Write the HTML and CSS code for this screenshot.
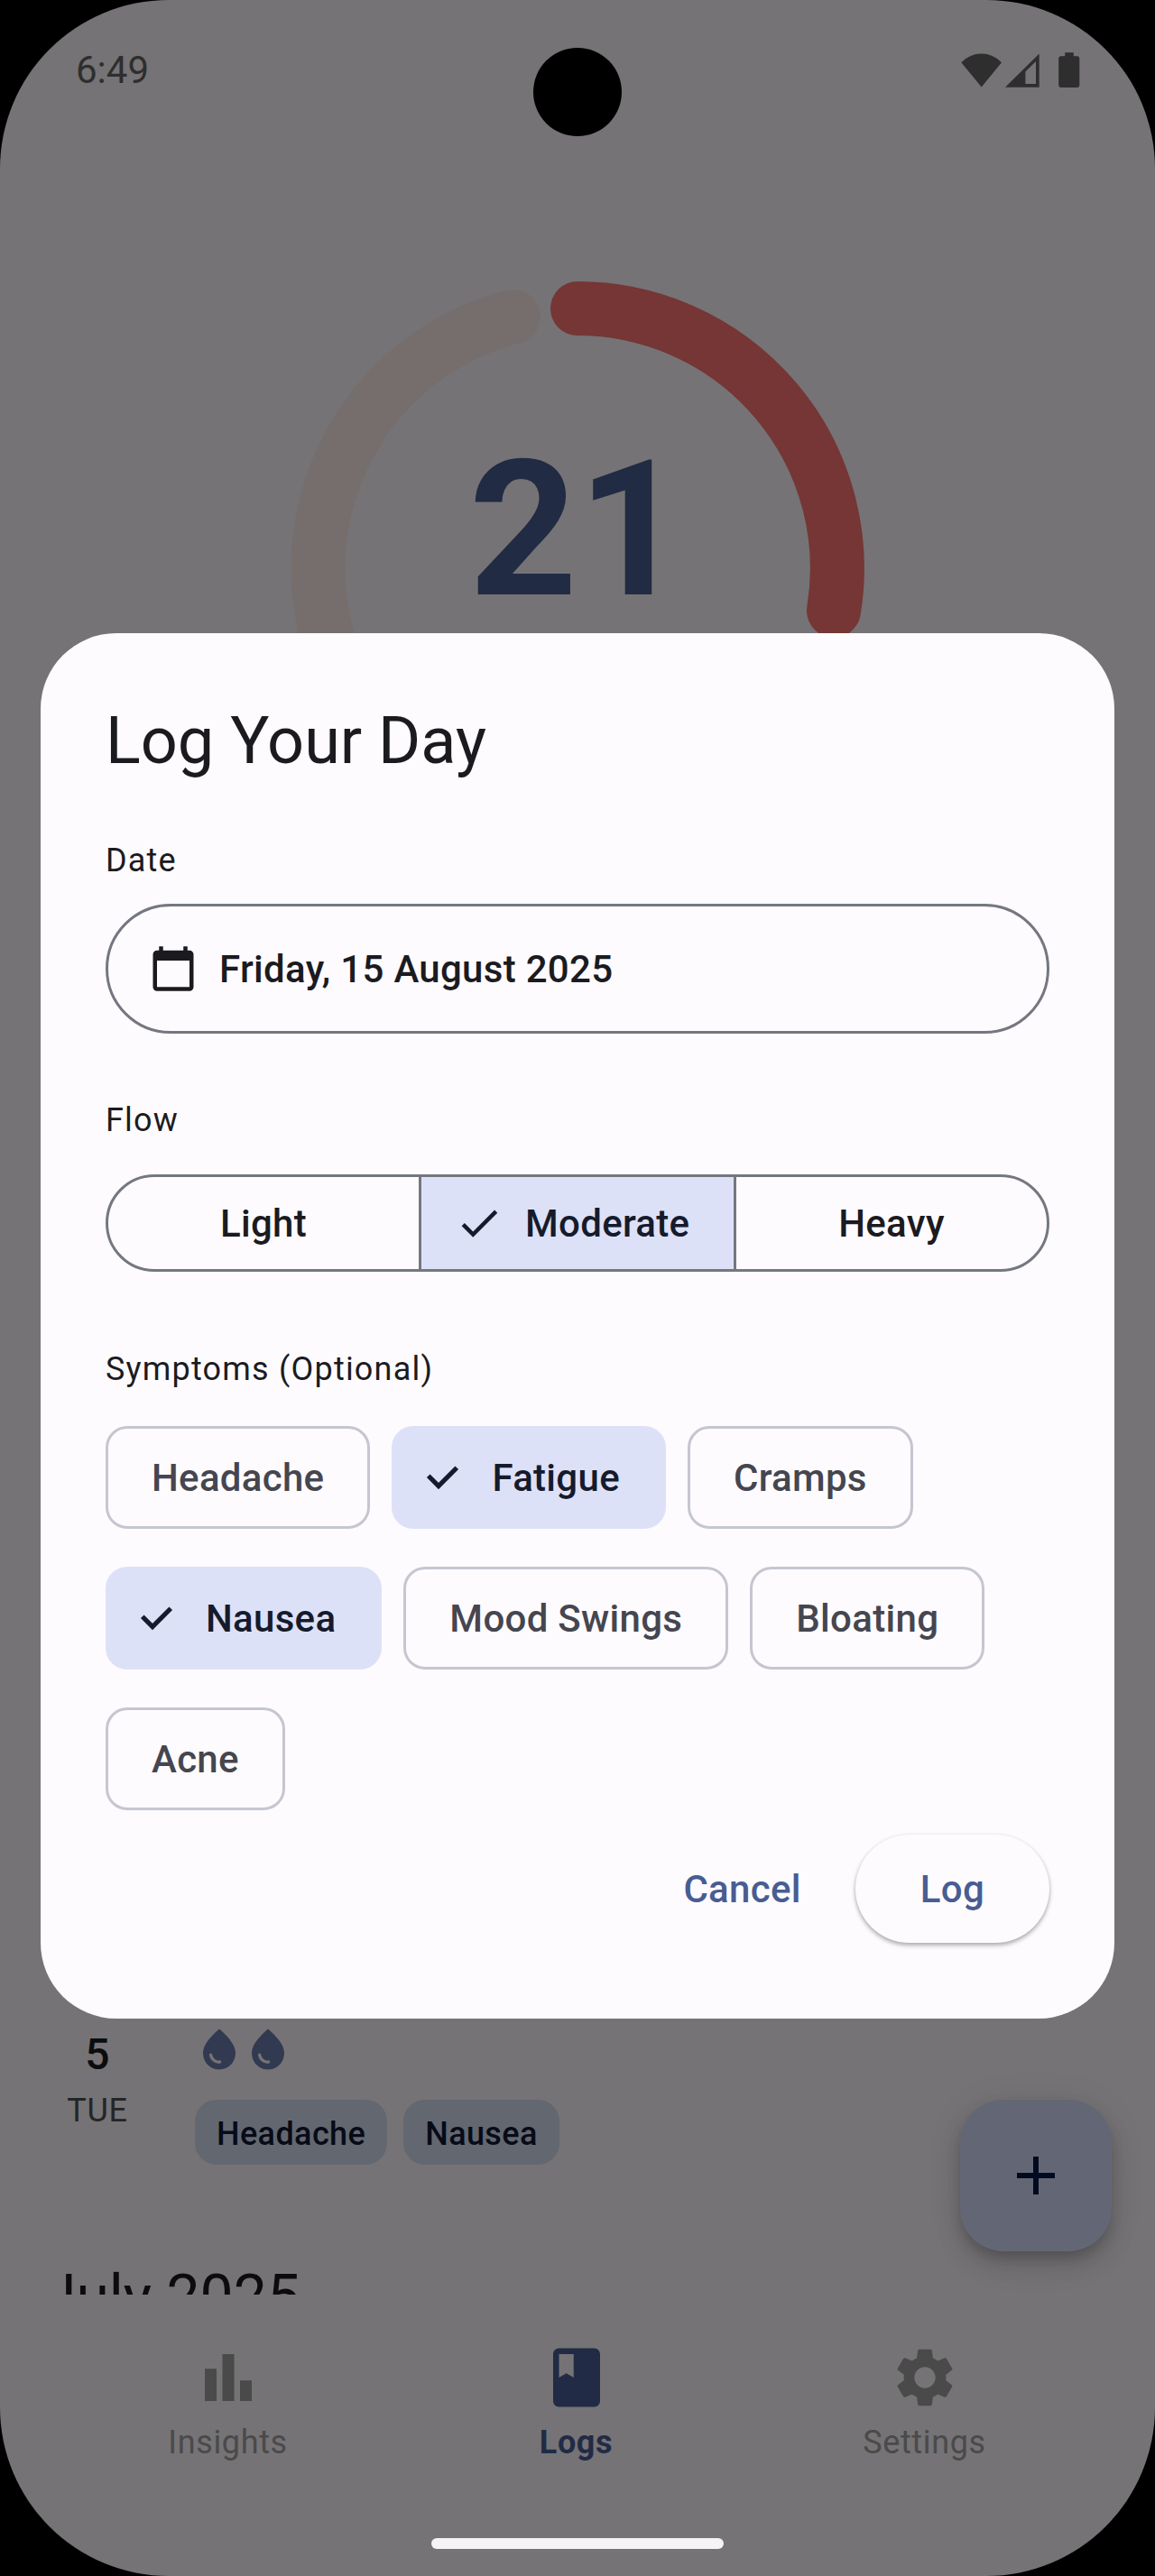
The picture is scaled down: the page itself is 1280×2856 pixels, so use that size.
FILE: index.html
```html
<!DOCTYPE html>
<html lang="en">
<head>
<meta charset="utf-8">
<title>Log Your Day</title>
<link rel="stylesheet" href="styles.css">
</head>
<body>
<div class="screen">
  <header class="status">
    <span class="status-time">6:49</span>
    <span class="status-icons">
      <svg width="46" height="38" viewBox="0 0 46 38"><path d="M0.3 10.2Q10 .5 22.7 .5T45 10.2L22.7 37.5z"/></svg>
      <svg class="signal" width="38" height="38" viewBox="0 0 38 38"><path fill-rule="evenodd" d="M37.7 .5V37.8H0zM34 9L22.4 20.6V34H34z"/></svg>
      <svg class="battery" width="24" height="40" viewBox="0 0 24 40"><path d="M7.2 .3H16.8V4.3H21Q23.3 4.3 23.3 6.8V36.6Q23.3 39 21 39H2.6Q.2 39 .2 36.6V6.8Q.2 4.3 2.6 4.3H7.2z"/></svg>
    </span>
  </header>

  <main class="content">
    <section class="cycle">
      <svg class="ring" viewBox="0 0 636 636">
        <path class="ring-rest" d="M247 39A288 288 0 0 0 318 606"/>
        <path class="ring-period" d="M318 30A288 288 0 0 1 602 365"/>
      </svg>
      <span class="cycle-day">21</span>
    </section>
    <article class="entry">
      <div class="entry-date"><span class="entry-num">5</span><span class="entry-wd">TUE</span></div>
      <div class="entry-body">
        <div class="drops">
          <svg viewBox="0 0 24 24"><path d="M12 2c-5.33 4.55-8 8.48-8 11.8 0 4.98 3.8 8.2 8 8.2s8-3.22 8-8.2c0-3.32-2.67-7.25-8-11.8zM7.83 14c.37 0 .67.26.74.62.41 2.22 2.28 2.98 3.64 2.87.43-.02.79.32.79.75 0 .4-.32.73-.72.75-2.13.13-4.62-1.09-5.19-4.12-.08-.45.28-.87.74-.87z"/></svg>
          <svg viewBox="0 0 24 24"><path d="M12 2c-5.33 4.55-8 8.48-8 11.8 0 4.98 3.8 8.2 8 8.2s8-3.22 8-8.2c0-3.32-2.67-7.25-8-11.8zM7.83 14c.37 0 .67.26.74.62.41 2.22 2.28 2.98 3.64 2.87.43-.02.79.32.79.75 0 .4-.32.73-.72.75-2.13.13-4.62-1.09-5.19-4.12-.08-.45.28-.87.74-.87z"/></svg>
        </div>
        <div class="tags"><span class="tag">Headache</span><span class="tag">Nausea</span></div>
      </div>
    </article>
    <h2 class="month">July 2025</h2>
  </main>

  <nav class="nav">
    <a class="nav-item"><svg viewBox="0 0 24 24"><path d="M4 9h4v11H4zm12 4h4v7h-4zm-6-9h4v16h-4z"/></svg><span>Insights</span></a>
    <a class="nav-item nav-active"><svg viewBox="0 0 24 24"><path d="M18 2H6c-1.1 0-2 .9-2 2v16c0 1.1.9 2 2 2h12c1.1 0 2-.9 2-2V4c0-1.1-.9-2-2-2zM6 4h5v8l-2.5-1.5L6 12V4z"/></svg><span>Logs</span></a>
    <a class="nav-item"><svg viewBox="0 0 24 24"><path d="M19.14 12.94c.04-.3.06-.61.06-.94 0-.32-.02-.64-.07-.94l2.03-1.58c.18-.14.23-.41.12-.61l-1.92-3.32c-.12-.22-.37-.29-.59-.22l-2.39.96c-.5-.38-1.03-.7-1.62-.94l-.36-2.54c-.04-.24-.24-.41-.48-.41h-3.84c-.24 0-.43.17-.47.41l-.36 2.54c-.59.24-1.13.57-1.62.94l-2.39-.96c-.22-.08-.47 0-.59.22L2.74 8.87c-.12.21-.08.47.12.61l2.03 1.58c-.05.3-.09.63-.09.94s.02.64.07.94l-2.03 1.58c-.18.14-.23.41-.12.61l1.92 3.32c.12.22.37.29.59.22l2.39-.96c.5.38 1.03.7 1.62.94l.36 2.54c.05.24.24.41.48.41h3.84c.24 0 .44-.17.47-.41l.36-2.54c.59-.24 1.13-.56 1.62-.94l2.39.96c.22.08.47 0 .59-.22l1.92-3.32c.12-.22.07-.47-.12-.61l-2.01-1.58zM12 15.6c-1.98 0-3.6-1.62-3.6-3.6s1.62-3.6 3.6-3.6 3.6 1.62 3.6 3.6-1.62 3.6-3.6 3.6z"/></svg><span>Settings</span></a>
  </nav>
  <div class="home-bar"></div>

  <button class="fab" aria-label="Add"><svg viewBox="0 0 24 24"><path d="M19 13h-6v6h-2v-6H5v-2h6V5h2v6h6z"/></svg></button>
  <div class="camera"></div>

  <div class="dialog" role="dialog">
    <h1 class="title">Log Your Day</h1>
    <div class="label label-date">Date</div>
    <button class="date">
      <svg viewBox="0 0 24 24"><path d="M20 3h-1V1h-2v2H7V1H5v2H4c-1.1 0-2 .9-2 2v16c0 1.1.9 2 2 2h16c1.1 0 2-.9 2-2V5c0-1.1-.9-2-2-2zm0 18H4V8h16v13z"/></svg>
      <span>Friday, 15 August 2025</span>
    </button>
    <div class="label label-flow">Flow</div>
    <div class="segments">
      <button class="segment">Light</button>
      <button class="segment segment-on"><svg viewBox="0 0 24 24"><path d="M9 16.17L4.83 12l-1.42 1.41L9 19 21 7l-1.41-1.41z"/></svg>Moderate</button>
      <button class="segment">Heavy</button>
    </div>
    <div class="label label-symptoms">Symptoms (Optional)</div>
    <div class="chips">
      <button class="chip">Headache</button>
      <button class="chip chip-on"><svg viewBox="0 0 45 45"><path d="M6.75 20.25L18 31.5L38.25 11.25"/></svg>Fatigue</button>
      <button class="chip">Cramps</button>
      <button class="chip chip-on"><svg viewBox="0 0 45 45"><path d="M6.75 20.25L18 31.5L38.25 11.25"/></svg>Nausea</button>
      <button class="chip">Mood Swings</button>
      <button class="chip">Bloating</button>
      <button class="chip">Acne</button>
    </div>
    <div class="actions">
      <button class="btn">Cancel</button>
      <button class="btn btn-raised">Log</button>
    </div>
  </div>
</div>
</body>
</html>
```
FILE: styles.css
```css
* { box-sizing: border-box; }
body { margin: 0; background: #000; font-family: Roboto, sans-serif; }
h1, h2 { margin: 0; font-weight: 400; }
button { margin: 0; padding: 0; border: 0; background: none; font: inherit; letter-spacing: inherit; color: inherit; }
svg { display: block; flex: none; fill: currentColor; }

.screen {
  position: relative;
  display: flex;
  flex-direction: column;
  width: 1280px;
  height: 2856px;
  border-radius: 187px;
  overflow: hidden;
  background: #757375;
}

/* status bar */
.status {
  display: flex;
  justify-content: space-between;
  height: 156px;
  padding: 54px 83px 0 84px;
  color: #2e2e2e;
}
.status-time { font-size: 42px; line-height: 48px; }
.status-icons { display: flex; align-items: flex-start; padding-top: 4px; }
.status-icons > :first-child { margin-top: 1px; }
.signal { margin: 1px 0 0 3px; }
.battery { margin-left: 21px; }
.camera {
  position: absolute;
  top: 53px;
  left: 591px;
  width: 98px;
  height: 98px;
  border-radius: 50%;
  background: #000;
}

/* dimmed page */
.content { height: 2388px; padding-top: 156px; overflow: hidden; }
.cycle { display: grid; place-items: center; height: 636px; }
.cycle > * { grid-area: 1 / 1; }
.ring { width: 636px; height: 636px; fill: none; stroke-width: 60; stroke-linecap: round; }
.ring-rest { stroke: #756e6d; }
.ring-period { stroke: #753635; }
.cycle-day { padding-bottom: 86px; font-size: 210px; line-height: 240px; font-weight: 700; color: #212b43; }
.entry { display: flex; gap: 48px; margin-top: 1294px; padding-left: 48px; }
.entry-date { display: flex; flex-direction: column; align-items: center; gap: 2px; width: 120px; }
.entry-num { font-size: 48px; line-height: 72px; font-weight: 500; color: #0c0c0e; }
.entry-wd { font-size: 36px; line-height: 48px; letter-spacing: .8px; color: #242526; }
.entry-body { padding-top: 2.5px; }
.drops { display: flex; color: #313a50; }
.drops svg { width: 54px; height: 54px; }
.tags { display: flex; gap: 18px; margin-top: 29.5px; }
.tag {
  height: 72px;
  padding: 2px 24px 0;
  border-radius: 24px;
  background: #636770;
  font-size: 36px;
  line-height: 72px;
  font-weight: 500;
  letter-spacing: .4px;
  color: #080b17;
}
.month { margin-top: 105px; padding-left: 48px; font-size: 66px; line-height: 84px; color: #0c0c0e; }

.nav { display: flex; justify-content: center; height: 270px; padding: 53px 3px 0 0; color: #4a4a4a; }
.nav-item {
  display: flex;
  flex-direction: column;
  align-items: center;
  gap: 9px;
  width: 386px;
  font-size: 36px;
  line-height: 48px;
  letter-spacing: .65px;
}
.nav-item svg { width: 78px; height: 78px; }
.nav-active { color: #212b46; font-weight: 700; }
.home-bar { width: 324px; height: 12px; margin: 0 auto; border-radius: 6px; background: #f4f4f4; }

.fab {
  position: absolute;
  top: 2328px;
  right: 48px;
  display: grid;
  place-items: center;
  width: 168px;
  height: 168px;
  border-radius: 48px;
  background: #636775;
  color: #000a20;
  box-shadow: 0 9px 15px -3px rgba(0, 0, 0, .2), 0 18px 30px rgba(0, 0, 0, .1), 0 3px 40px rgba(0, 0, 0, .08);
}
.fab svg { width: 72px; height: 72px; }

/* dialog */
.dialog {
  position: absolute;
  top: 702px;
  left: 45px;
  right: 45px;
  height: 1536px;
  padding: 72px;
  border-radius: 84px;
  background: #fefbff;
  color: #1b1b1f;
  font-size: 42px;
  font-weight: 500;
  letter-spacing: .3px;
}
.title { font-size: 72px; line-height: 96px; letter-spacing: 0; }
.label { font-size: 36px; line-height: 48px; font-weight: 400; letter-spacing: 1.2px; }
.label-date { margin: 60px 0 24px; }
.label-flow { margin: 72px 0 36px; }
.label-symptoms { margin: 84px 0 39px; }
.date {
  display: flex;
  align-items: center;
  gap: 24px;
  width: 100%;
  height: 144px;
  padding: 0 45px;
  border: 3px solid #757780;
  border-radius: 72px;
}
.date svg { width: 54px; height: 54px; }
.segments {
  display: grid;
  grid-template-columns: 344px 349px 1fr;
  height: 108px;
  border: 3px solid #757780;
  border-radius: 54px;
  overflow: hidden;
}
.segment { display: flex; align-items: center; justify-content: center; }
.segment + .segment { border-left: 3px solid #757780; }
.segment.segment-on { justify-content: flex-start; gap: 24px; padding-left: 37px; background: #dde1f8; color: #151b2c; }
.segment svg { width: 54px; height: 54px; }
.chips { display: flex; flex-wrap: wrap; gap: 42px 24px; }
.chip {
  display: flex;
  align-items: center;
  height: 114px;
  padding: 0 48px;
  border: 3px solid #c5c6d0;
  border-radius: 24px;
  color: #45464f;
}
.chip-on { padding-left: 31px; border-color: #dde1f8; background: #dde1f8; color: #151b2c; }
.chip svg { width: 45px; height: 45px; margin-right: 32px; fill: none; stroke: currentColor; stroke-width: 5.2; }
.actions { display: flex; justify-content: flex-end; gap: 24px; margin-top: 27px; color: #485d92; }
.btn { height: 120px; padding: 0 36px; border-radius: 60px; }
.btn-raised { padding: 0 72px; background: #fefbff; box-shadow: 0 3px 5px rgba(0, 0, 0, .26), 0 1px 4px rgba(0, 0, 0, .12); }
```
